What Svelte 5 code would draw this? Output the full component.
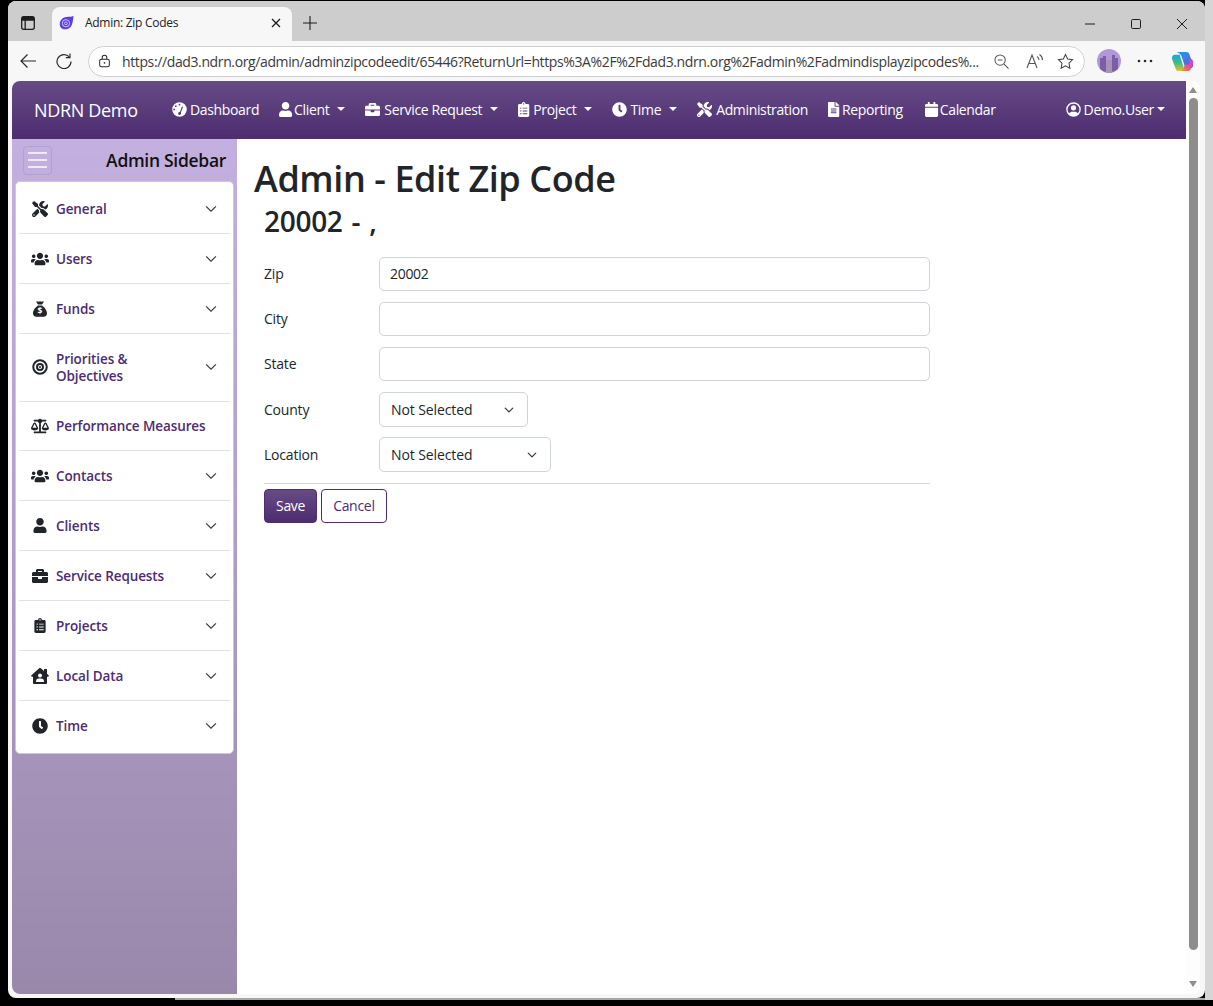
<script>
  const P = {
    gauge: ["0 0 512 512", "M256 8a248 248 0 1 0 0 496 248 248 0 1 0 0-496zM256 62a30 30 0 1 1 0 60 30 30 0 1 1 0-60zM130 112a30 30 0 1 1 0 60 30 30 0 1 1 0-60zM72 226a30 30 0 1 1 0 60 30 30 0 1 1 0-60zM338 150l40 16-74 196a52 52 0 1 1-84-6 52 52 0 0 1 50-16z"],
    user: ["0 0 448 512", "M224 256c70.7 0 128-57.3 128-128S294.7 0 224 0 96 57.3 96 128s57.3 128 128 128zm89.6 32h-16.7c-22.2 10.2-46.9 16-72.9 16s-50.6-5.8-72.9-16h-16.7C60.2 288 0 348.2 0 422.4V464c0 26.5 21.5 48 48 48h352c26.5 0 48-21.5 48-48v-41.6c0-74.2-60.2-134.4-134.4-134.4z"],
    briefcase: ["0 0 512 512", "M320 336c0 8.84-7.16 16-16 16h-96c-8.84 0-16-7.16-16-16v-48H0v144c0 25.6 22.4 48 48 48h416c25.6 0 48-22.4 48-48V288H320v48zm144-208h-80V80c0-25.6-22.4-48-48-48H176c-25.6 0-48 22.4-48 48v48H48c-25.6 0-48 22.4-48 48v80h512v-80c0-25.6-22.4-48-48-48zm-144 0H192V96h128v32z"],
    clipboard: ["0 0 384 512", "M336 64h-80c0-35.3-28.7-64-64-64s-64 28.7-64 64H48C21.5 64 0 85.5 0 112v352c0 26.5 21.5 48 48 48h288c26.5 0 48-21.5 48-48V112c0-26.5-21.5-48-48-48zM96 424c-13.3 0-24-10.7-24-24s10.7-24 24-24 24 10.7 24 24-10.7 24-24 24zm0-96c-13.3 0-24-10.7-24-24s10.7-24 24-24 24 10.7 24 24-10.7 24-24 24zm0-96c-13.3 0-24-10.7-24-24s10.7-24 24-24 24 10.7 24 24-10.7 24-24 24zm96-192c13.3 0 24 10.7 24 24s-10.7 24-24 24-24-10.7-24-24 10.7-24 24-24zm128 368c0 4.4-3.6 8-8 8H168c-4.4 0-8-3.6-8-8v-16c0-4.4 3.6-8 8-8h144c4.4 0 8 3.6 8 8v16zm0-96c0 4.4-3.6 8-8 8H168c-4.4 0-8-3.6-8-8v-16c0-4.4 3.6-8 8-8h144c4.4 0 8 3.6 8 8v16zm0-96c0 4.4-3.6 8-8 8H168c-4.4 0-8-3.6-8-8v-16c0-4.4 3.6-8 8-8h144c4.4 0 8 3.6 8 8v16z"],
    clock: ["0 0 512 512", "M256 8C119 8 8 119 8 256s111 248 248 248 248-111 248-248S393 8 256 8zm92.49 313l-20 25a16 16 0 0 1-22.49 2.5l-67-49.72a40 40 0 0 1-15-31.23V112a16 16 0 0 1 16-16h32a16 16 0 0 1 16 16v144l58 42.5a16 16 0 0 1 2.49 22.5z"],
    tools: ["0 0 512 512", "M501.1 395.7L384 278.6c-23.1-23.1-57.6-27.6-85.4-13.9L192 158.1V96L64 0 0 64l96 128h62.1l106.6 106.6c-13.6 27.8-9.2 62.3 13.9 85.4l117.1 117.1c14.6 14.6 38.2 14.6 52.7 0l52.7-52.7c14.5-14.6 14.5-38.2 0-52.7zM331.7 225c28.3 0 54.9 11 74.9 31l19.4 19.4c15.8-6.9 30.8-16.5 43.8-29.5 37.1-37.1 49.7-89.3 37.9-136.7-2.2-9-13.5-12.1-20.1-5.5l-74.4 74.4-67.9-11.3L334 98.9l74.4-74.4c6.6-6.6 3.4-17.9-5.7-20.2-47.4-11.7-99.6.9-136.6 37.9-28.5 28.5-41.9 66.1-41.2 103.6l82.1 82.1c8.1-1.9 16.5-2.9 24.7-2.9zm-103.9 82l-56.7-56.7L18.7 402.8c-25 25-25 65.5 0 90.5s65.5 25 90.5 0l123.6-123.6c-7.6-19.9-9.9-41.6-5-62.7zM64 472c-13.2 0-24-10.8-24-24 0-13.3 10.7-24 24-24s24 10.7 24 24c0 13.2-10.7 24-24 24z"],
    file: ["0 0 384 512", "M224 136V0H24C10.7 0 0 10.7 0 24v464c0 13.3 10.7 24 24 24h336c13.3 0 24-10.7 24-24V160H248c-13.2 0-24-10.8-24-24zm64 236c0 6.6-5.4 12-12 12H108c-6.6 0-12-5.4-12-12v-8c0-6.6 5.4-12 12-12h168c6.6 0 12 5.4 12 12v8zm0-64c0 6.6-5.4 12-12 12H108c-6.6 0-12-5.4-12-12v-8c0-6.6 5.4-12 12-12h168c6.6 0 12 5.4 12 12v8zm0-72v8c0 6.6-5.4 12-12 12H108c-6.6 0-12-5.4-12-12v-8c0-6.6 5.4-12 12-12h168c6.6 0 12 5.4 12 12zm96-114.1v6.1H256V0h6.1c6.4 0 12.5 2.5 17 7l97.9 98c4.5 4.5 7 10.6 7 16.9z"],
    calendar: ["0 0 448 512", "M12 192h424c6.6 0 12 5.4 12 12v260c0 26.5-21.5 48-48 48H48c-26.5 0-48-21.5-48-48V204c0-6.6 5.4-12 12-12zm436-44v-36c0-26.5-21.5-48-48-48h-48V12c0-6.6-5.4-12-12-12h-40c-6.6 0-12 5.4-12 12v52H160V12c0-6.6-5.4-12-12-12h-40c-6.6 0-12 5.4-12 12v52H48C21.5 64 0 85.5 0 112v36c0 6.6 5.4 12 12 12h424c6.6 0 12-5.4 12-12z"],
    usercircle: ["0 0 512 512", "M256 8a248 248 0 1 0 0 496 248 248 0 1 0 0-496zM256 56a200 200 0 0 1 150 332c-26-34-66-54-110-54h-80c-44 0-84 20-110 54A200 200 0 0 1 256 56zM256 112a88 88 0 1 0 0 176 88 88 0 1 0 0-176z"],
    users: ["0 0 640 512", "M96 224c35.3 0 64-28.7 64-64s-28.7-64-64-64-64 28.7-64 64 28.7 64 64 64zm448 0c35.3 0 64-28.7 64-64s-28.7-64-64-64-64 28.7-64 64 28.7 64 64 64zm32 32h-64c-17.6 0-33.5 7.1-45.1 18.6 40.3 22.1 68.9 62 75.1 109.4h66c17.7 0 32-14.3 32-32v-32c0-35.3-28.7-64-64-64zm-256 0c61.9 0 112-50.1 112-112S381.9 32 320 32 208 82.1 208 144s50.1 112 112 112zm76.8 32h-8.3c-20.8 10-43.9 16-68.5 16s-47.6-6-68.5-16h-8.3C179.6 288 128 339.6 128 403.2V432c0 26.5 21.5 48 48 48h288c26.5 0 48-21.5 48-48v-28.8c0-63.6-51.6-115.2-115.2-115.2zm-223.7-13.4C161.5 263.1 145.6 256 128 256H64c-35.3 0-64 28.7-64 64v32c0 17.7 14.3 32 32 32h65.9c6.3-47.4 34.9-87.3 75.2-109.4z"],
    sack: ["0 0 512 512", "M190 112h132l50-78c7-11-1-26-14-26-20 0-36 14-52 14-18 0-32-14-50-14s-32 14-50 14c-16 0-32-14-52-14-13 0-21 15-14 26zM322 144H190C120 196 32 290 32 400c0 58 46 104 104 104h240c58 0 104-46 104-104 0-110-88-204-158-256z"],
    target: ["0 0 512 512", "M256 8a248 248 0 1 0 0 496 248 248 0 1 0 0-496zm0 64a184 184 0 1 1 0 368 184 184 0 1 1 0-368zm0 56a128 128 0 1 0 0 256 128 128 0 1 0 0-256zm0 64a64 64 0 1 1 0 128 64 64 0 1 1 0-128zm0 32a32 32 0 1 0 0 64 32 32 0 1 0 0-64z"],
    scale: ["0 0 640 512", "M256 336h-.02c0-16.18 1.34-8.73-85.05-181.51-17.65-35.29-68.19-35.36-85.87 0C-2.06 328.75.02 320.33.02 336H0c0 44.18 57.31 80 128 80s128-35.82 128-80zM128 176l72 144H56l72-144zm511.98 160c0-16.18 1.34-8.73-85.05-181.51-17.65-35.29-68.19-35.36-85.87 0-87.12 174.26-85.04 165.84-85.04 181.51H384c0 44.18 57.31 80 128 80s128-35.82 128-80h-.02zM440 320l72-144 72 144H440zm88 128H352V153.25c23.51-10.29 41.16-31.48 46.39-57.25H528c8.84 0 16-7.16 16-16V48c0-8.84-7.16-16-16-16H383.64C369.04 12.68 346.09 0 320 0s-49.04 12.68-63.64 32H112c-8.84 0-16 7.16-16 16v32c0 8.84 7.16 16 16 16h129.61c5.23 25.76 22.87 46.96 46.39 57.25V448H112c-8.84 0-16 7.16-16 16v32c0 8.84 7.16 16 16 16h416c8.84 0 16-7.16 16-16v-32c0-8.84-7.16-16-16-16z"],
    house: ["0 0 576 512", "M570.69 236.27L512 184.44V48a16 16 0 0 0-16-16h-64a16 16 0 0 0-16 16v51.67L314.78 10.3C308.5 4.61 296.53 0 288 0s-20.46 4.61-26.74 10.3l-256 226A18.27 18.27 0 0 0 0 248.2a18.64 18.64 0 0 0 4.09 10.71L25.5 282.7a21.14 21.14 0 0 0 12 5.3 21.67 21.67 0 0 0 10.69-4.11l15.9-14V480a32 32 0 0 0 32 32H480a32 32 0 0 0 32-32V269.88l15.91 14A21.94 21.94 0 0 0 538.63 288a20.89 20.89 0 0 0 11.87-5.31l21.41-23.81A21.64 21.64 0 0 0 576 248.19a21 21 0 0 0-5.31-11.92zM288 176a64 64 0 1 1-64 64 64 64 0 0 1 64-64zm112 272H176a16 16 0 0 1-16-16 96 96 0 0 1 96-96h64a96 96 0 0 1 96 96 16 16 0 0 1-16 16z"]
  };

  // w is the icon box including the space before the label
  const navItems = [
    { icon: "gauge", label: "Dashboard", w: 18 },
    { icon: "user", label: "Client", caret: true, w: 15 },
    { icon: "briefcase", label: "Service Request", caret: true, w: 19 },
    { icon: "clipboard", label: "Project", caret: true, w: 15 },
    { icon: "clock", label: "Time", caret: true, w: 18 },
    { icon: "tools", label: "Administration", w: 19 },
    { icon: "file", label: "Reporting", w: 14 },
    { icon: "calendar", label: "Calendar", w: 15 }
  ];

  const sideItems = [
    { icon: "tools", label: "General", chevron: true },
    { icon: "users", label: "Users", chevron: true },
    { icon: "sack", label: "Funds", chevron: true, dollar: true },
    { icon: "target", label: "Priorities & Objectives", chevron: true, tall: true },
    { icon: "scale", label: "Performance Measures" },
    { icon: "users", label: "Contacts", chevron: true },
    { icon: "user", label: "Clients", chevron: true, small: true },
    { icon: "briefcase", label: "Service Requests", chevron: true },
    { icon: "clipboard", label: "Projects", chevron: true, small: true },
    { icon: "house", label: "Local Data", chevron: true },
    { icon: "clock", label: "Time", chevron: true }
  ];

  const chevron = "M1.646 4.646a.5.5 0 0 1 .708 0L8 10.293l5.646-5.647a.5.5 0 0 1 .708.708l-6 6a.5.5 0 0 1-.708 0l-6-6a.5.5 0 0 1 0-.708z";
  const url = "https://dad3.ndrn.org/admin/adminzipcodeedit/65446?ReturnUrl=https%3A%2F%2Fdad3.ndrn.org%2Fadmin%2Fadmindisplayzipcodes%...";
</script>

<div class="desktop">
  <div class="window">
    <div class="tabstrip">
      <svg class="tabs-btn" viewBox="0 0 16 16" width="16" height="16" fill="none" stroke="#1c1c1c" stroke-width="1.3">
        <rect x="1.700" y="1.700" width="12.600" height="12.600" rx="2" />
        <path d="M1.700 5.200h12.600M5.200 5.200v9" stroke-width="1.300" />
        <rect x="2" y="2" width="12" height="3" fill="#1c1c1c" stroke="none" />
      </svg>
      <div class="tab">
        <svg class="favicon" viewBox="0 0 16 16" width="15" height="15">
          <path d="M15.500 .8C13.500 2 11 1.800 8 2.200 3.500 2.800 .8 6 .8 9.800c0 3.200 2.400 5.400 5.500 5.400 2.500 0 4.800-1 6.300-2.800 1.900-2.300 2.300-6.500 2.900-11.600z" fill="#5b3de0" />
          <circle cx="7.400" cy="8.800" r="3.900" fill="none" stroke="#d9ccff" stroke-width="1" />
          <circle cx="7.400" cy="8.800" r="1.500" fill="none" stroke="#d9ccff" stroke-width=".9" />
        </svg>
        <span class="tab-title">Admin: Zip Codes</span>
        <svg viewBox="0 0 10 10" width="10" height="10" stroke="#1c1c1c" stroke-width="1.300"><path d="M1 1l8 8M9 1l-8 8" /></svg>
      </div>
      <svg class="newtab" viewBox="0 0 14 14" width="14" height="14" stroke="#1c1c1c" stroke-width="1.100"><path d="M7 0v14M0 7h14" /></svg>
      <div class="caption">
        <svg viewBox="0 0 10 10" width="10" height="10" stroke="#1c1c1c"><path d="M0 5h10" /></svg>
        <svg viewBox="0 0 10 10" width="10" height="10" fill="none" stroke="#1c1c1c"><rect x=".5" y=".5" width="9" height="9" rx="1.200" /></svg>
        <svg viewBox="0 0 10 10" width="10" height="10" stroke="#1c1c1c"><path d="M0 0l10 10M10 0L0 10" /></svg>
      </div>
    </div>

    <div class="toolbar">
      <svg class="tool-first" viewBox="0 0 16 16" width="16" height="16" fill="none" stroke="#2a2a2a" stroke-width="1.200"><path d="M16 8H1M7.500 1.500L1 8l6.500 6.500" /></svg>
      <svg viewBox="0 0 16 16" width="16" height="16" fill="none" stroke="#2a2a2a" stroke-width="1.200"><path d="M13.500 4.200A7 7 0 1 0 15 8.500" /><path d="M14 .5v4.200H9.800" /></svg>
      <div class="address">
        <svg viewBox="0 0 14 14" width="13" height="14" fill="none" stroke="#2a2a2a" stroke-width="1.100"><rect x="1.800" y="5" width="10.400" height="8.200" rx="2" /><path d="M4.500 5V3.400a2.500 2.500 0 0 1 5 0V5" /><circle cx="7" cy="9" r=".9" fill="#2a2a2a" stroke="none" /></svg>
        <span class="url">{url}</span>
        <div class="addr-icons">
          <svg class="zoom-out" viewBox="0 0 16 16" width="15" height="15" fill="none" stroke="#555" stroke-width="1.100"><circle cx="6.500" cy="6.500" r="5.500" /><path d="M4 6.500h5M10.500 10.500L15.500 15.500" /></svg>
          <svg viewBox="0 0 18 16" width="18" height="16" fill="none" stroke="#555" stroke-width="1.100"><path d="M1 15L6 2l5 13M2.800 10.500h6.400M11 3.500a4 4 0 0 1 2 3.500M13.500 1.500a6.500 6.500 0 0 1 3 5.500" /></svg>
          <svg viewBox="0 0 18 18" width="17" height="17" fill="none" stroke="#444" stroke-width="1.100"><path d="M9 1.500l2.300 4.900 5.200.7-3.800 3.700.9 5.300L9 13.500l-4.600 2.600.9-5.300L1.500 7.100l5.200-.7z" /></svg>
        </div>
      </div>
      <svg class="avatar" viewBox="0 0 24 24" width="24" height="24">
        <circle cx="12" cy="12" r="12" fill="#b397d6" />
        <path d="M3 20V9h3V7h3v4h6V6h3v3h3v11l-4 2.500H7z" fill="#7a5fa8" />
        <rect x="9" y="11" width="6" height="13" fill="#a993b4" />
      </svg>
      <svg class="more" viewBox="0 0 16 4" width="16" height="4" fill="#2a2a2a"><circle cx="2" cy="2" r="1.300" /><circle cx="8" cy="2" r="1.300" /><circle cx="14" cy="2" r="1.300" /></svg>
      <svg class="copilot" viewBox="0 0 24 24" width="23" height="23">
        <defs>
          <linearGradient id="cpa" x1="0" y1="0" x2="1" y2="1"><stop offset="0" stop-color="#1fa0ea" /><stop offset=".6" stop-color="#4a70e8" /><stop offset="1" stop-color="#8a48e0" /></linearGradient>
          <linearGradient id="cpb" x1="0" y1="1" x2="1" y2="0"><stop offset="0" stop-color="#f0a030" /><stop offset=".5" stop-color="#ea5088" /><stop offset="1" stop-color="#c040e0" /></linearGradient>
          <linearGradient id="cpc" x1="0" y1="0" x2="0" y2="1"><stop offset="0" stop-color="#18a8e0" /><stop offset=".5" stop-color="#38c080" /><stop offset="1" stop-color="#f0c020" /></linearGradient>
        </defs>
        <path d="M15 22H8c-1.500 0-2.500-.8-3-2L1 9c-.5-2 1-4 3-4h5l4 12.500c.7 2 1 3.500 2 4.500z" fill="url(#cpc)" />
        <path d="M6 2h10c1.500 0 2.500.8 3 2l4 11c.5 2-1 4-3 4h-5L11 6.500C10.300 4.500 8 3 6 2z" fill="url(#cpa)" />
        <path d="M19 9h1c2 0 3.500 2 3 4l-2 6c-.7 2-2 3-4 3H9c2 0 3.500-1 4.200-3l1.300-4h3c1.500 0 2-1 1.500-3z" fill="url(#cpb)" />
      </svg>
    </div>

    <div class="page">
      <div class="viewport">
        <nav class="navbar">
          <span class="brand">NDRN Demo</span>
          <div class="nav-links">
            {#each navItems as item}
              <span class="nav-link">
                <svg class="nav-icon" viewBox={P[item.icon][0]} preserveAspectRatio="xMinYMid meet" style="width:{item.w}px"><path fill-rule="evenodd" d={P[item.icon][1]} /></svg>
                {item.label}
                {#if item.caret}<i class="caret"></i>{/if}
              </span>
            {/each}
          </div>
          <span class="nav-link account">
            <svg class="nav-icon" viewBox={P.usercircle[0]} preserveAspectRatio="xMinYMid meet" style="width:18px"><path fill-rule="evenodd" d={P.usercircle[1]} /></svg>
            Demo.User<i class="caret tight"></i>
          </span>
        </nav>

        <div class="body">
          <aside class="sidebar">
            <div class="side-head">
              <button class="burger" aria-label="Toggle sidebar"><span></span><span></span><span></span></button>
              <span class="side-title">Admin Sidebar</span>
            </div>
            <div class="side-card">
              {#each sideItems as item}
                <div class="side-item" class:tall={item.tall} class:plain={!item.chevron}>
                  <span class="side-icon">
                    <svg viewBox={P[item.icon][0]} class:small={item.small}><path fill-rule="evenodd" d={P[item.icon][1]} />
                      {#if item.dollar}<text x="256" y="430" text-anchor="middle" font-size="270" font-weight="700" fill="#fff">$</text>{/if}
                    </svg>
                  </span>
                  <span class="side-label">{item.label}</span>
                  {#if item.chevron}
                    <svg class="side-chevron" viewBox="0 0 16 16"><path d={chevron} /></svg>
                  {/if}
                </div>
              {/each}
            </div>
          </aside>

          <main class="content">
            <h1>Admin - Edit Zip Code</h1>
            <h2>20002 - ,</h2>
            <form class="form">
              <div class="row"><label for="zip">Zip</label><input id="zip" value="20002" /></div>
              <div class="row"><label for="city">City</label><input id="city" /></div>
              <div class="row"><label for="state">State</label><input id="state" /></div>
              <div class="row sel"><label for="county">County</label>
                <select id="county" class="county"><option>Not Selected</option></select>
              </div>
              <div class="row sel"><label for="loc">Location</label>
                <select id="loc" class="location"><option>Not Selected</option></select>
              </div>
              <hr />
              <div class="actions">
                <button type="button" class="btn save">Save</button>
                <button type="button" class="btn cancel">Cancel</button>
              </div>
            </form>
          </main>
        </div>
      </div>

      <div class="scrollbar">
        <i class="arrow up"></i>
        <div class="thumb"></div>
        <i class="arrow down"></i>
      </div>
    </div>
  </div>
</div>

<style>
  :global(body) {
    margin: 0;
    background: #000;
    font-family: "Open Sans", "Noto Sans", sans-serif;
  }

  .desktop {
    width: 1213px;
    height: 1006px;
    box-sizing: border-box;
    padding: 1px 8px 8px 8px;
    overflow: hidden;
    background:
      linear-gradient(#d6d6d6, #d6d6d6) right top / 8px 1000px no-repeat,
      linear-gradient(#a8a8a8, #a8a8a8) 175px 998px / 1038px 2px no-repeat,
      #000;
  }

  .window {
    height: 100%;
    background: #f7f7f7;
    border-radius: 8px;
    overflow: hidden;
    display: flex;
    flex-direction: column;
  }

  .tabstrip {
    height: 40px;
    flex: none;
    background: #cdcdcd;
    display: flex;
    align-items: flex-end;
  }

  .tabs-btn {
    margin: 0 0 10px 12px;
  }

  .tab {
    width: 240px;
    height: 34px;
    margin-left: 16px;
    box-sizing: border-box;
    padding: 0 11px 3px 7px;
    background: #f7f7f7;
    border-radius: 8px 8px 0 0;
    display: flex;
    align-items: center;
    gap: 11px;
  }

  .tab-title {
    flex: 1;
    font-size: 12px;
    letter-spacing: -0.28px;
    color: #222;
  }

  .newtab {
    margin: 0 0 11px 11px;
  }

  .caption {
    margin: 0 18px 12px auto;
    align-self: flex-end;
    display: flex;
    gap: 36px;
  }

  .toolbar {
    height: 40px;
    flex: none;
    display: flex;
    align-items: center;
  }

  .tool-first {
    margin: 0 20px 0 12px;
  }

  .address {
    width: 997px;
    height: 31px;
    margin-left: 16px;
    box-sizing: border-box;
    padding: 0 10px 0 9px;
    background: #fff;
    border: 1px solid #d0d0d0;
    border-radius: 16px;
    display: flex;
    align-items: center;
    gap: 11px;
  }

  .url {
    font-size: 14px;
    letter-spacing: -0.38px;
    color: #3a3a3a;
    white-space: nowrap;
    overflow: hidden;
    flex: 1;
  }

  .addr-icons {
    display: flex;
    align-items: center;
    gap: 13px;
  }

  .zoom-out {
    margin-right: 4px;
  }

  .avatar {
    margin-left: 12px;
  }

  .more {
    margin-left: 16px;
  }

  .copilot {
    margin-left: 18px;
  }

  .page {
    flex: 1;
    min-height: 0;
    margin: 0 5px 4px 4px;
    background: #fff;
    border-radius: 8px 8px 8px 8px;
    overflow: hidden;
    display: flex;
  }

  .viewport {
    flex: 1;
    min-width: 0;
    display: flex;
    flex-direction: column;
  }

  .navbar {
    height: 58px;
    flex: none;
    padding: 0 21px 0 22px;
    background: linear-gradient(#664b85, #4d2c70);
    color: #fff;
    display: flex;
    align-items: center;
  }

  .brand {
    width: 138px;
    font-size: 18px;
    letter-spacing: -0.33px;
  }

  .nav-links {
    display: flex;
    gap: 20px;
  }

  .nav-link {
    padding-bottom: 2px;
    display: flex;
    align-items: center;
    font-size: 14px;
    letter-spacing: -0.35px;
    white-space: nowrap;
  }

  .nav-links .nav-link:last-child {
    margin-left: 2px;
  }

  .nav-icon {
    height: 15px;
    fill: #fff;
  }

  .caret {
    width: 0;
    height: 0;
    margin-left: 8px;
    border-top: 4px solid #fff;
    border-left: 4px solid transparent;
    border-right: 4px solid transparent;
  }

  .caret.tight {
    margin-left: 3px;
  }

  .account {
    margin-left: auto;
  }

  .body {
    flex: 1;
    min-height: 0;
    display: flex;
  }

  .sidebar {
    width: 225px;
    flex: none;
    box-sizing: border-box;
    padding: 0 3px;
    background: linear-gradient(#c4b0e0, #9a88ab);
  }

  .side-head {
    height: 42px;
    padding: 0 8px 0 8px;
    display: flex;
    align-items: center;
    justify-content: space-between;
  }

  .burger {
    width: 29px;
    height: 29px;
    padding: 0 4px;
    background: transparent;
    border: 1px solid #b3a0cf;
    border-radius: 4px;
    display: flex;
    flex-direction: column;
    justify-content: center;
    gap: 5px;
  }

  .burger span {
    height: 2px;
    background: #efe9f6;
  }

  .side-title {
    font-size: 17.500px;
    font-weight: 600;
    letter-spacing: -0.3px;
    color: #111;
  }

  .side-card {
    padding: 2px 3px 3px;
    background: #fff;
    border: 1px solid #cfc6dc;
    border-radius: 5px;
  }

  .side-item {
    height: 49px;
    padding: 0 13px 0 12px;
    border-bottom: 1px solid #dee2e6;
    display: flex;
    align-items: center;
  }

  .side-item:last-child {
    border-bottom: 0;
  }

  .side-item.tall {
    height: 65px;
    padding-bottom: 2px;
  }

  .side-item.plain {
    height: 47px;
    padding-bottom: 1px;
  }

  .tall .side-label {
    padding-right: 60px;
  }

  .side-icon {
    width: 18px;
    margin-right: 7px;
    flex: none;
    display: flex;
    justify-content: center;
  }

  .side-icon svg {
    width: 18px;
    height: 16px;
    fill: #212529;
  }

  .side-icon svg.small {
    height: 15px;
  }

  .side-label {
    flex: 1;
    padding-top: 2px;
    font-size: 13.500px;
    font-weight: 600;
    line-height: 17px;
    letter-spacing: -0.1px;
    color: #4d2c70;
  }

  .side-chevron {
    width: 12px;
    height: 12px;
    fill: #212529;
    stroke: #212529;
    stroke-width: 0.6;
  }

  .content {
    flex: 1;
    min-width: 0;
    padding: 17px 0 0 17px;
    color: #212529;
  }

  h1 {
    margin: 0;
    font-size: 36px;
    font-weight: 600;
    line-height: 45px;
    letter-spacing: -0.42px;
  }

  h2 {
    margin: 0 0 0 10px;
    font-size: 28px;
    font-weight: 600;
    line-height: 40px;
    letter-spacing: -0.3px;
    word-spacing: 2px;
  }

  .form {
    width: 666px;
    margin: 16px 0 0 10px;
  }

  .row {
    display: flex;
    align-items: center;
    margin-bottom: 11px;
  }

  .row.sel {
    margin-bottom: 10px;
  }

  label {
    width: 115px;
    padding-bottom: 2px;
    font-size: 14px;
    letter-spacing: -0.2px;
  }

  .sel label {
    padding-bottom: 0;
  }

  input,
  select {
    box-sizing: border-box;
    font: inherit;
    font-size: 14px;
    letter-spacing: -0.1px;
    color: #212529;
    background-color: #fff;
    border: 1px solid #ced4da;
    border-radius: 5px;
  }

  input {
    flex: 1;
    height: 34px;
    padding: 0 10px 2px;
    letter-spacing: -0.3px;
  }

  select {
    height: 35px;
    padding: 0 11px;
    appearance: none;
    background-image: url("data:image/svg+xml,%3csvg xmlns='http://www.w3.org/2000/svg' viewBox='0 0 16 16'%3e%3cpath fill='none' stroke='%23343a40' stroke-linecap='round' stroke-linejoin='round' stroke-width='2' d='m2 5 6 6 6-6'/%3e%3c/svg%3e");
    background-repeat: no-repeat;
    background-position: right 12px center;
    background-size: 12px 10px;
  }

  .county {
    width: 149px;
  }

  .location {
    width: 172px;
  }

  hr {
    margin: 11px 0 5px;
    border: 0;
    border-top: 1px solid #d8d8d8;
  }

  .actions {
    display: flex;
    gap: 4px;
  }

  .btn {
    height: 34px;
    padding: 0 11px 2px;
    font: inherit;
    font-size: 14px;
    letter-spacing: -0.3px;
    border-radius: 4px;
  }

  .save {
    color: #fff;
    background: linear-gradient(#664b85, #4d2c70);
    border: 1px solid #4d2c70;
  }

  .cancel {
    color: #4d2c70;
    background: #fff;
    border: 1px solid #4d2c70;
  }

  .scrollbar {
    width: 14px;
    flex: none;
    box-sizing: border-box;
    padding: 6px 0 7px;
    background: #fdfdfd;
    display: flex;
    flex-direction: column;
    align-items: center;
  }

  .thumb {
    flex: 1;
    width: 9px;
    margin: 5px 0 31px;
    background: #8d8d8d;
    border-radius: 5px;
  }

  .arrow {
    width: 0;
    height: 0;
    border-left: 4px solid transparent;
    border-right: 4px solid transparent;
  }

  .arrow.up {
    border-bottom: 6px solid #8d8d8d;
  }

  .arrow.down {
    border-top: 6px solid #8d8d8d;
  }
</style>
